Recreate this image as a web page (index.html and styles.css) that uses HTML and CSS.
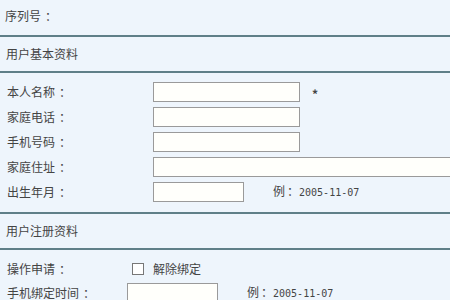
FILE: index.html
```html
<!DOCTYPE html>
<html>
<head>
    <meta charset="UTF-8">
    <title>用户资料</title>
    <link rel="stylesheet" href="styles.css">
</head>
<body>
<div class="serial">序列号<i>：</i></div>
<div class="title">用户基本资料</div>
<div class="group">
    <div class="field"><label>本人名称<i>：</i></label><input class="txt" type="text"><span class="req">*</span></div>
    <div class="field"><label>家庭电话<i>：</i></label><input class="txt" type="text"></div>
    <div class="field"><label>手机号码<i>：</i></label><input class="txt" type="text"></div>
    <div class="field"><label>家庭住址<i>：</i></label><input class="txt long" type="text"></div>
    <div class="field"><label>出生年月<i>：</i></label><input class="txt short" type="text"><span class="tip">例<i>：</i><em>2005-11-07</em></span></div>
</div>
<div class="title">用户注册资料</div>
<div class="group reg">
    <div class="field"><label>操作申请<i>：</i></label><span class="check"></span><span class="check-text">解除绑定</span></div>
    <div class="field"><label>手机绑定时间<i>：</i></label><input class="txt short" type="text"><span class="tip">例<i>：</i><em>2005-11-07</em></span></div>
</div>
</body>
</html>
```

FILE: styles.css
```css
html,body{
    margin: 0;
    padding: 0;
}
body{
    background-color: #eef5fc;
    color: #444;
    font: 12px/16px "Noto Sans CJK SC", sans-serif;
    overflow: hidden;
}
i{
    font-style: normal;
    padding-left: 4px;
}
.serial{
    height: 35px;
    padding-left: 5px;
    display: flex;
    align-items: center;
    box-sizing: border-box;
    padding-bottom: 3px;
}
.title{
    height: 34px;
    padding-left: 6px;
    display: flex;
    align-items: center;
    border-top: 2px solid #5f7f88;
    border-bottom: 2px solid #5f7f88;
}
.group{
    padding: 6px 0 8px;
}
.field{
    height: 25px;
    display: flex;
    align-items: center;
    white-space: nowrap;
}
.field label{
    width: 146px;
    padding-left: 7px;
    flex-shrink: 0;
}
.txt{
    width: 147px;
    height: 20px;
    margin: 0;
    padding: 0;
    box-sizing: border-box;
    border: 1px solid #9a9a9a;
    background-color: #fffffb;
    flex-shrink: 0;
}
.txt.long{
    flex: 1;
    border-right: none;
}
.txt.short{
    width: 91px;
}
.req{
    margin-left: 12px;
    margin-top: 4px;
    color: #444;
    font-weight: bold;
}
.tip{
    margin-left: 29px;
}
.tip i{
    padding-left: 2px;
}
.tip em{
    font-style: normal;
    font-family: "DejaVu Sans Mono", monospace;
    font-size: 10px;
}
.reg{
    padding-top: 7px;
}
.reg .field{
    height: 24px;
}
.reg .field label{
    width: 120px;
}
.check{
    width: 10px;
    height: 10px;
    margin-left: 5px;
    border: 1px solid #777;
    background-color: #fff;
}
.check-text{
    margin-left: 9px;
}
```
